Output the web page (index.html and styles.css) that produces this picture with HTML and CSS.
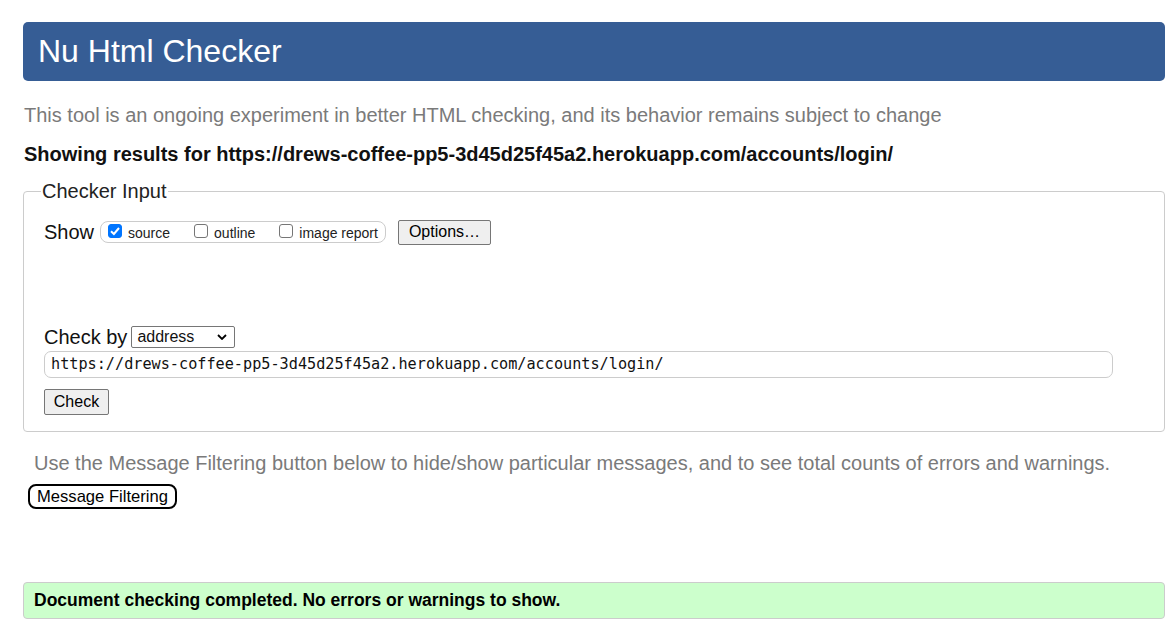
FILE: index.html
```html
<!DOCTYPE html>
<html lang="en">
<head>
<meta charset="utf-8">
<title>Nu Html Checker</title>
<link rel="stylesheet" href="styles.css">
</head>
<body>
<div class="page">
  <h1 class="banner">Nu Html Checker</h1>
  <p class="intro">This tool is an ongoing experiment in better HTML checking, and its behavior remains subject to change</p>
  <p class="showing">Showing results for https://drews-coffee-pp5-3d45d25f45a2.herokuapp.com/accounts/login/</p>
  <fieldset class="input">
    <legend class="legend">Checker Input</legend>
    <div class="show-row">
      <span class="show-label">Show</span>
      <span class="group">
        <label class="opt"><span class="box checked"><svg viewBox="0 0 14 14" width="14" height="14"><path d="M3 7.2 L5.9 10 L11 4" fill="none" stroke="#fff" stroke-width="2"/></svg></span>source</label>
        <label class="opt"><span class="box"></span>outline</label>
        <label class="opt"><span class="box"></span>image report</label>
      </span>
      <button class="btn options">Options…</button>
    </div>
    <div class="check-row">
      <span class="check-label">Check by</span>
      <span class="select">address<svg viewBox="0 0 10 6" width="10" height="6"><path d="M1 1 L5 5 L9 1" fill="none" stroke="#000" stroke-width="1.8"/></svg></span>
    </div>
    <div class="url">https://drews-coffee-pp5-3d45d25f45a2.herokuapp.com/accounts/login/</div>
    <button class="btn check">Check</button>
  </fieldset>
  <p class="filter-note">Use the Message Filtering button below to hide/show particular messages, and to see total counts of errors and warnings.</p>
  <button class="filter-btn">Message Filtering</button>
  <div class="success">Document checking completed. No errors or warnings to show.</div>
</div>
</body>
</html>
```

FILE: styles.css
```css
html, body {
  margin: 0;
  padding: 0;
  background: #fff;
}
body {
  font-family: "Liberation Sans", Arial, sans-serif;
  color: #111;
}
.page {
  margin: 22px 4px 0 23px;
}
.banner {
  margin: 0;
  height: 59px;
  box-sizing: border-box;
  background: #365d95;
  color: #fff;
  border-radius: 5px;
  font-weight: normal;
  font-size: 32px;
  line-height: 59px;
  padding-left: 15px;
}
.intro {
  margin: 22px 0 0 1px;
  font-size: 20px;
  line-height: 24px;
  color: #7a7a7a;
}
.showing {
  margin: 15px 0 0 1px;
  font-size: 20px;
  line-height: 24px;
  font-weight: bold;
  color: #111;
}
.input {
  margin: 14px 0 0 0;
  border: 1px solid #ccc;
  border-radius: 4px;
  padding: 8px 20px 16px 20px;
  min-height: 0;
}
.legend {
  font-size: 20px;
  padding: 0 1px;
  margin-left: -3px;
  color: #222;
}
.show-row {
  display: flex;
  align-items: center;
  height: 26px;
  margin-top: 8px;
}
.show-label {
  font-size: 20px;
  margin-right: 6px;
}
.group {
  display: flex;
  align-items: center;
  height: 22px;
  box-sizing: border-box;
  border: 1px solid #ccc;
  border-radius: 8px;
  padding: 0 7px 0 7px;
  font-size: 14px;
  margin-right: 12px;
}
.opt {
  display: flex;
  align-items: center;
  margin-right: 24px;
  color: #222;
  position: relative;
  top: 1px;
}
.opt:last-child {
  margin-right: 0;
}
.box {
  width: 14px;
  height: 14px;
  box-sizing: border-box;
  border: 1px solid #767676;
  border-radius: 3px;
  margin-right: 6px;
  position: relative;
  top: -2px;
  display: inline-block;
  line-height: 0;
}
.box.checked {
  background: #0075ff;
  border-color: #0075ff;
}
.box svg {
  position: absolute;
  left: -1px;
  top: -1px;
}
.btn {
  font-family: "Liberation Sans", Arial, sans-serif;
  font-size: 16px;
  color: #000;
  background: #efefef;
  border: 1px solid #767676;
  border-radius: 2px;
  padding: 0 9px;
  height: 25px;
}
.options {
  padding: 0 10px;
  margin-left: 0;
}
.check-row {
  display: flex;
  align-items: center;
  margin-top: 80px;
  height: 24px;
}
.check-label {
  font-size: 20px;
  margin-right: 4px;
}
.select {
  display: flex;
  align-items: center;
  justify-content: space-between;
  width: 104px;
  height: 22px;
  box-sizing: border-box;
  border: 1px solid #767676;
  border-radius: 2px;
  padding: 0 7px 0 5px;
  font-size: 16px;
}
.url {
  margin-top: 2px;
  width: 1069px;
  height: 27px;
  box-sizing: border-box;
  border: 1px solid #ccc;
  border-radius: 7px;
  font-family: "DejaVu Sans Mono", "Liberation Mono", monospace;
  font-size: 15.2px;
  line-height: 25px;
  padding-left: 6px;
  color: #111;
}
.check {
  margin-top: 11px;
  width: 65px;
  height: 26px;
  padding: 0;
}
.filter-note {
  margin: 19px 0 0 11px;
  font-size: 20px;
  line-height: 24px;
  color: #7a7a7a;
}
.filter-btn {
  display: block;
  margin: 9px 0 0 5px;
  font-family: "Liberation Sans", Arial, sans-serif;
  font-size: 16.6px;
  color: #000;
  background: #fff;
  border: 2px solid #000;
  border-radius: 8px;
  height: 25px;
  padding: 0 7px;
}
.success {
  margin-top: 73px;
  height: 37px;
  box-sizing: border-box;
  background: #ccffcc;
  border: 1px solid #ccc;
  border-radius: 4px;
  font-weight: bold;
  font-size: 17.5px;
  line-height: 35px;
  padding-left: 10px;
  color: #000;
}
```
